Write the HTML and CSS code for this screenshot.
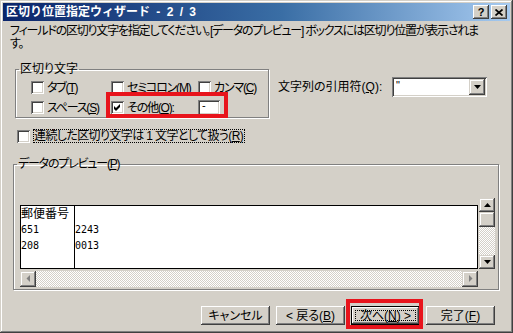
FILE: index.html
```html
<!DOCTYPE html>
<html lang="ja">
<head>
<meta charset="utf-8">
<title>区切り位置指定ウィザード - 2 / 3</title>
<link rel="stylesheet" href="styles.css">
</head>
<body>
<div class="window">
  <div class="titlebar">
    <span class="title">区切り位置指定ウィザード - 2 / 3</span>
    <span class="tb-btn help">?</span>
    <span class="tb-btn close"><svg width="8" height="7" viewBox="0 0 8 7"><path d="M0.5 0.5 L7.5 6.5 M7.5 0.5 L0.5 6.5" stroke="#000" stroke-width="1.7" fill="none"/></svg></span>
  </div>

  <p class="intro">フィールドの区切り文字を指定してください。[データのプレビュー] ボックスには区切り位置が表示されま<br>す。</p>

  <div class="options">
    <fieldset class="group delims">
      <legend>区切り文字</legend>
      <div class="delim-rows">
        <div class="row">
          <span class="chk w80"><span class="box"></span><span class="lbl">タブ(<u>T</u>)</span></span>
          <span class="chk w87"><span class="box"></span><span class="lbl">セミコロン(<u>M</u>)</span></span>
          <span class="chk"><span class="box"></span><span class="lbl">カンマ(<u>C</u>)</span></span>
        </div>
        <div class="row">
          <span class="chk w80"><span class="box"></span><span class="lbl">スペース(<u>S</u>)</span></span>
          <span class="other-wrap">
            <span class="chk w87"><span class="box"><svg width="7" height="7" viewBox="0 0 7 7"><polygon points="0,2 2,4 6,0 6,3 2,7 0,5" fill="#000"/></svg></span><span class="lbl">その他(<u>O</u>):</span></span>
            <span class="textbox">-</span>
          </span>
        </div>
      </div>
    </fieldset>
    <div class="quote">
      <span class="quote-label">文字列の引用符(<u>Q</u>):</span>
      <span class="combo">
        <span class="combo-text">"</span>
        <span class="sbtn combo-btn"><svg width="7" height="4" viewBox="0 0 7 4"><polygon points="0,0 7,0 3.5,4" fill="#000"/></svg></span>
      </span>
    </div>
  </div>

  <div class="consecutive">
    <span class="box"></span>
    <span class="focus-label">連続した区切り文字は 1 文字として扱う(<u>R</u>)</span>
  </div>

  <fieldset class="group preview">
    <legend>データのプレビュー(<u>P</u>)</legend>
    <div class="preview-grid">
      <div class="data">
        <div class="col col1">
          <div class="cell">郵便番号</div>
          <div class="cell num">651</div>
          <div class="cell num">208</div>
        </div>
        <div class="col col2">
          <div class="cell">&nbsp;</div>
          <div class="cell num">2243</div>
          <div class="cell num">0013</div>
        </div>
      </div>
      <div class="vscroll">
        <span class="sbtn vbtn up"><svg width="7" height="4" viewBox="0 0 7 4"><polygon points="0,4 3.5,0 7,4" fill="#000"/></svg></span>
        <span class="sbtn thumb"></span>
        <span class="track"></span>
        <span class="sbtn vbtn down"><svg width="7" height="4" viewBox="0 0 7 4"><polygon points="0,0 7,0 3.5,4" fill="#000"/></svg></span>
      </div>
      <div class="hscroll">
        <span class="sbtn hbtn"><svg width="5" height="8" viewBox="0 0 5 8"><polygon points="4,0 4,7 0.5,3.5" fill="#808080"/></svg></span>
        <span class="track"></span>
        <span class="sbtn hbtn"><svg width="5" height="8" viewBox="0 0 5 8"><polygon points="1,0 1,7 4.5,3.5" fill="#808080"/></svg></span>
      </div>
    </div>
  </fieldset>

  <div class="buttons">
    <span class="btn"><span>キャンセル</span></span>
    <span class="btn"><span>&lt; 戻る(<u>B</u>)</span></span>
    <span class="btn default"><span>次へ(<u>N</u>) &gt;</span></span>
    <span class="btn"><span>完了(<u>F</u>)</span></span>
  </div>
</div>
</body>
</html>
```

FILE: styles.css
```css
* { box-sizing: border-box; }

html, body {
  margin: 0;
  padding: 0;
  background: #d4d0c8;
}

body {
  font-family: "Liberation Sans", "Noto Sans CJK JP", sans-serif;
  font-size: 12px;
  line-height: 12px;
  color: #000;
  font-feature-settings: "palt";
}

u {
  text-decoration: underline;
  text-underline-offset: 1px;
}

.window {
  width: 513px;
  height: 333px;
  padding: 3px;
  background: #d4d0c8;
  box-shadow: inset -1px -1px #404040, inset 1px 1px #d4d0c8, inset -2px -2px #808080, inset 2px 2px #fff;
  display: flex;
  flex-direction: column;
  overflow: hidden;
}

/* ---------- title bar ---------- */
.titlebar {
  flex: none;
  height: 18px;
  display: flex;
  align-items: center;
  padding: 0 3px;
  background: linear-gradient(90deg, #0a246a 0%, #3a6ea5 55%, #a6caf0 100%);
  color: #fff;
  font-weight: 700;
}

.title {
  flex: 1;
  white-space: nowrap;
  font-feature-settings: normal;
  word-spacing: 3px;
}

.tb-btn {
  flex: none;
  width: 16px;
  height: 14px;
  background: #d4d0c8;
  box-shadow: inset -1px -1px #404040, inset 1px 1px #fff, inset -2px -2px #808080;
  display: flex;
  align-items: center;
  justify-content: center;
  color: #000;
}

.help {
  font-size: 11px;
  font-weight: 700;
}

.close {
  margin-left: 2px;
}

/* ---------- intro ---------- */
.intro {
  flex: none;
  margin: 4px 0 0 7px;
  line-height: 13px;
  white-space: nowrap;
  letter-spacing: -1.2px;
}

/* ---------- options ---------- */
.options {
  flex: none;
  display: flex;
  align-items: flex-start;
  margin: 12px 0 0 12px;
}

fieldset.group {
  margin: 0;
  padding: 0;
  min-width: 0;
  border: 1px solid #808080;
  box-shadow: inset 1px 1px #fff, 1px 1px #fff;
}

fieldset.group legend {
  margin-left: 3px;
  padding: 0 1px;
  line-height: 12px;
}

fieldset.delims {
  width: 254px;
}

.delim-rows {
  padding: 6px 0 3px 15px;
  display: flex;
  flex-direction: column;
  gap: 7px;
}

.row {
  display: flex;
  align-items: center;
  height: 13px;
}

.chk {
  display: flex;
  align-items: center;
  gap: 3px;
  white-space: nowrap;
}

.lbl {
  white-space: nowrap;
  letter-spacing: -1.2px;
}

.w80 { width: 80px; }
.w87 { width: 87px; }

.box {
  flex: none;
  width: 13px;
  height: 13px;
  background: #fff;
  box-shadow: inset 1px 1px #808080, inset -1px -1px #fff, inset 2px 2px #404040, inset -2px -2px #d4d0c8;
  display: flex;
  align-items: center;
  justify-content: center;
}

.other-wrap {
  position: relative;
  display: flex;
  align-items: center;
}

.other-wrap::after {
  content: "";
  position: absolute;
  left: -5px;
  right: -8px;
  top: -8px;
  bottom: -3px;
  border: 4px solid #e8141c;
}

.textbox {
  flex: none;
  width: 22px;
  height: 15px;
  background: #fff;
  box-shadow: inset 1px 1px #808080, inset -1px -1px #fff, inset 2px 2px #404040, inset -2px -2px #d4d0c8;
  padding: 1px 0 0 4px;
  font-size: 11px;
  line-height: 9px;
}

.quote {
  display: flex;
  align-items: center;
  margin: 14px 0 0 9px;
}

.quote-label {
  width: 114px;
  white-space: nowrap;
}

.combo {
  width: 95px;
  height: 20px;
  background: #fff;
  box-shadow: inset 1px 1px #808080, inset -1px -1px #fff, inset 2px 2px #404040, inset -2px -2px #d4d0c8;
  padding: 2px;
  display: flex;
  align-items: stretch;
}

.combo-text {
  flex: 1;
  padding: 1px 0 0 2px;
  font-size: 11px;
  line-height: 10px;
}

.sbtn {
  flex: none;
  background: #d4d0c8;
  box-shadow: inset -1px -1px #404040, inset 1px 1px #d4d0c8, inset -2px -2px #808080, inset 2px 2px #fff;
  display: flex;
  align-items: center;
  justify-content: center;
}

.combo-btn {
  width: 16px;
}

/* ---------- consecutive ---------- */
.consecutive {
  flex: none;
  display: flex;
  align-items: center;
  gap: 3px;
  margin: 11px 0 0 14px;
}

.focus-label {
  border: 1px dotted #000;
  padding: 0 1px 0 0;
  line-height: 12px;
  white-space: nowrap;
  letter-spacing: -0.6px;
}

/* ---------- preview ---------- */
fieldset.preview {
  flex: none;
  width: 486px;
  margin: 15px 0 0 10px;
}

fieldset.preview legend {
  letter-spacing: -1.2px;
}

.preview-grid {
  margin: 28px 2px 2px 6px;
  display: grid;
  grid-template-columns: 458px 16px;
  grid-template-rows: 7px 64px 18px;
  column-gap: 1px;
}

.data {
  grid-column: 1;
  grid-row: 2;
  background: #fff;
  border: 1px solid #000;
  display: flex;
}

.col1 {
  width: 53px;
  flex: none;
}

.col2 {
  flex: 1;
  border-left: 1px solid #000;
}

.cell {
  height: 16px;
  line-height: 16px;
  white-space: nowrap;
}

.num {
  font-family: "DejaVu Sans Mono", "Liberation Mono", monospace;
  font-size: 10px;
}

.vscroll {
  grid-column: 2;
  grid-row: 1 / span 2;
  display: flex;
  flex-direction: column;
}

.vbtn { height: 14px; }
.thumb { height: 15px; }

.track {
  flex: 1;
  background-color: #fff;
  background-image: repeating-conic-gradient(#d4d0c8 0 25%, #fff 0 50%);
  background-size: 2px 2px;
}

.hscroll {
  grid-column: 1;
  grid-row: 3;
  margin-top: 2px;
  display: flex;
}

.hbtn { width: 16px; }

/* ---------- buttons ---------- */
.buttons {
  flex: none;
  display: flex;
  justify-content: flex-end;
  gap: 6px;
  margin-top: 16px;
  padding-right: 15px;
}

.btn {
  width: 69px;
  height: 19px;
  display: flex;
  align-items: center;
  justify-content: center;
  white-space: nowrap;
  background: #d4d0c8;
  box-shadow: inset -1px -1px #404040, inset 1px 1px #fff, inset -2px -2px #808080, inset 2px 2px #d4d0c8;
}

.btn.default {
  position: relative;
  box-shadow: inset 0 0 0 1px #000, inset -2px -2px #404040, inset 2px 2px #fff, inset -3px -3px #808080;
  outline: 1px dotted #000;
  outline-offset: -5px;
}

.btn.default::after {
  content: "";
  position: absolute;
  left: -5px;
  right: -3px;
  top: -7px;
  bottom: -4px;
  border: 4px solid #e8141c;
}
```
